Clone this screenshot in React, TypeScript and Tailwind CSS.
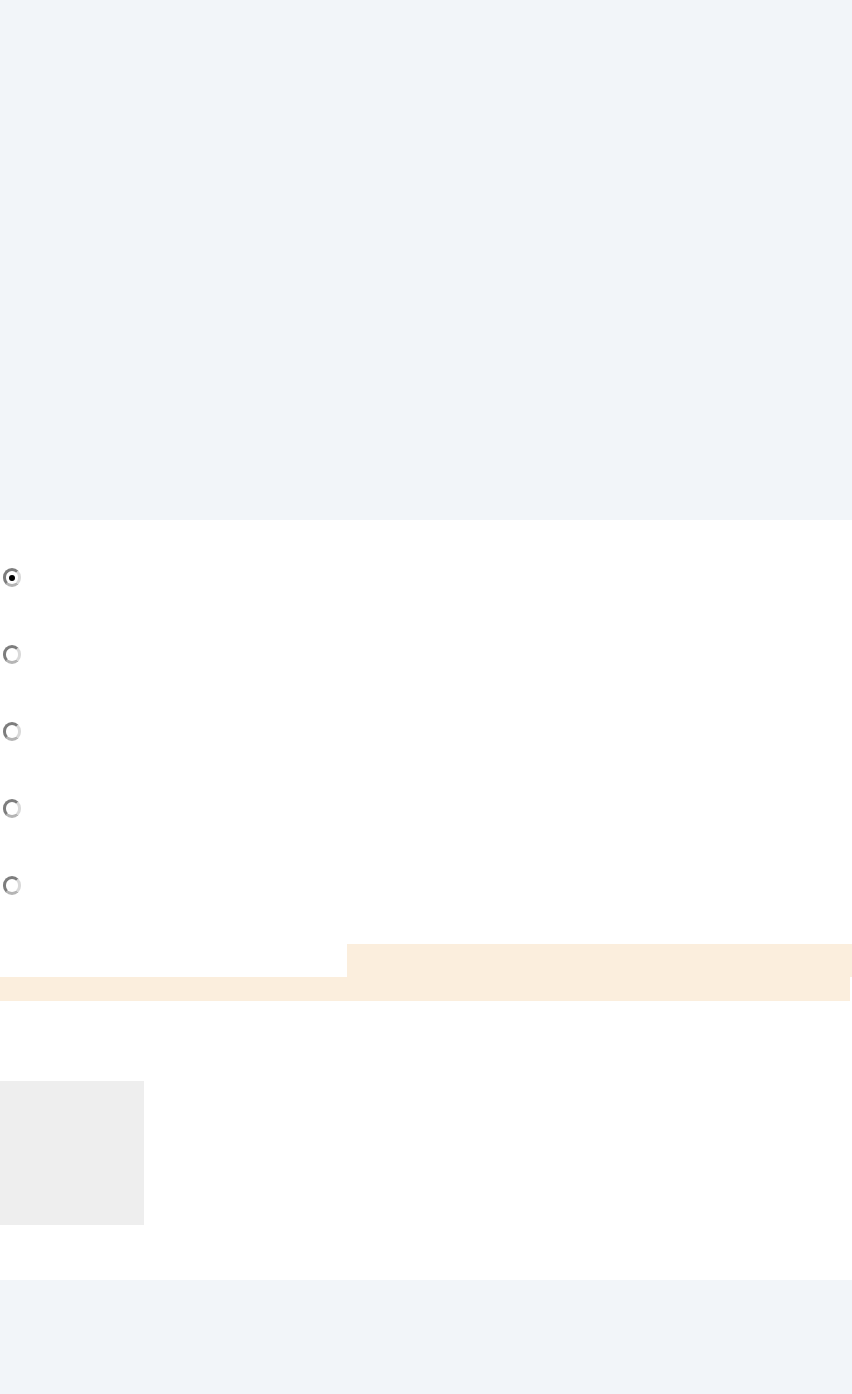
// Survey page skeleton — header band, option list, highlight, thumbnail, footer

const OPTIONS = ["a", "b", "c", "d", "e"]

function Radio({ checked }: { checked?: boolean }) {
  return (
    <span className="ml-[3px] flex h-[19px] w-[18px] items-center justify-center rounded-full border-[3px] border-[#7d7d7d] border-r-[#d9d9d9] border-b-[#b5b5b5] bg-white">
      {checked && <span className="h-[6px] w-[6px] rounded-full bg-black" />}
    </span>
  )
}

export default function App() {
  return (
    <main className="min-h-[1394px] w-full bg-white" style={{ fontFamily: '"Liberation Sans", Arial, sans-serif' }}>
      <header className="h-[520px] w-full bg-[#f2f5f9]" />

      <section className="flex flex-col pt-[19px]">
        {OPTIONS.map((o, i) => (
          <label key={o} className="flex h-[77px] items-center">
            <Radio checked={i === 0} />
          </label>
        ))}
      </section>

      <div className="mt-[20px] flex flex-col">
        <div className="flex">
          <div className="w-[347px]" />
          <div className="h-[33px] flex-1 bg-[#fbeedd]" />
        </div>
        <div className="h-[24px] w-[850px] bg-[#fbeedd]" />
      </div>

      <div className="mt-[80px] h-[144px] w-[144px] bg-[#eeeeee]" />

      <footer className="mt-[55px] h-[114px] w-full bg-[#f2f5f9]" />
    </main>
  )
}
